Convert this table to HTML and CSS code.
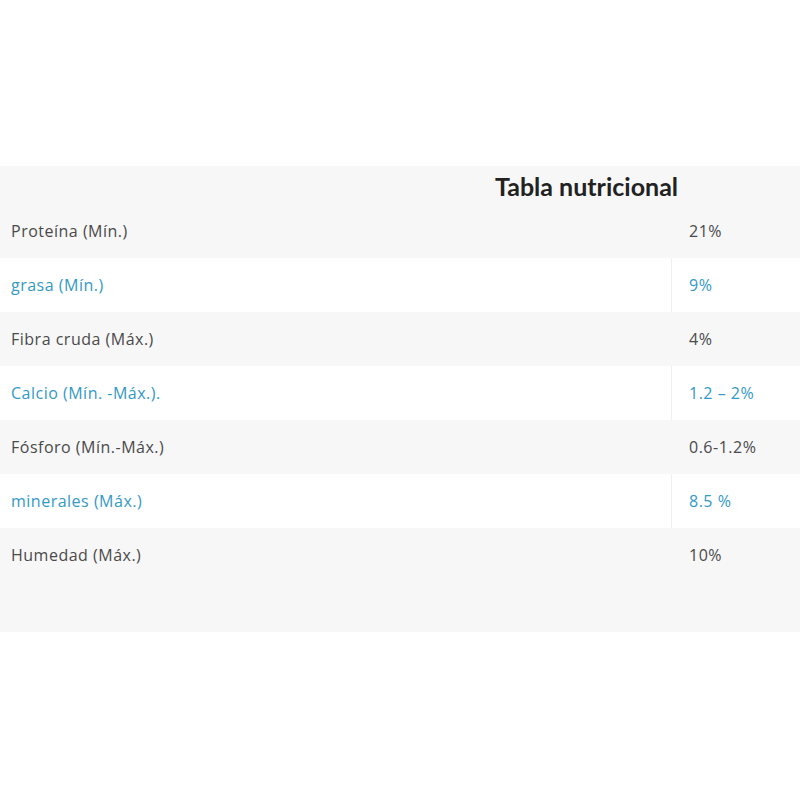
FILE: index.html
```html
<!DOCTYPE html>
<html lang="es">
<head>
<meta charset="utf-8">
<title>Tabla nutricional</title>
<link rel="stylesheet" href="styles.css">
</head>
<body>
<section class="panel">
  <h2 class="title">Tabla nutricional</h2>
  <table class="nutri">
    <tbody>
      <tr class="odd"><td class="label">Proteína (Mín.)</td><td class="value">21%</td></tr>
      <tr class="even"><td class="label">grasa (Mín.)</td><td class="value">9%</td></tr>
      <tr class="odd"><td class="label">Fibra cruda (Máx.)</td><td class="value">4%</td></tr>
      <tr class="even"><td class="label">Calcio (Mín. -Máx.).</td><td class="value">1.2 – 2%</td></tr>
      <tr class="odd"><td class="label">Fósforo (Mín.-Máx.)</td><td class="value">0.6-1.2%</td></tr>
      <tr class="even"><td class="label">minerales (Máx.)</td><td class="value">8.5 %</td></tr>
      <tr class="odd"><td class="label">Humedad (Máx.)</td><td class="value">10%</td></tr>
    </tbody>
  </table>
</section>
</body>
</html>
```

FILE: styles.css
```css
html, body {
  margin: 0;
  padding: 0;
  background: #ffffff;
}
body {
  padding-top: 166px;
  font-family: "Open Sans", "Liberation Sans", sans-serif;
}
.panel {
  background: #f7f7f7;
  padding-bottom: 50px;
}
.title {
  margin: 0;
  height: 38px;
  padding-left: 495px;
  font-family: Lato, "Liberation Sans", sans-serif;
  font-weight: 700;
  font-size: 25px;
  line-height: 40px;
  color: #222222;
}
.nutri {
  width: 100%;
  border-collapse: collapse;
  font-size: 16px;
  letter-spacing: 0.5px;
}
.nutri td {
  height: 54px;
  padding: 0;
  vertical-align: middle;
}
.label {
  padding-left: 11px !important;
  width: 660px;
}
.value {
  padding-left: 17px !important;
  border-left: 1px solid #f0f0f0;
}
.odd {
  background: #f7f7f7;
  color: #4a4a4a;
}
.odd .value {
  border-left-color: #f7f7f7;
}
.even {
  background: #ffffff;
  color: #3399c5;
}
```
